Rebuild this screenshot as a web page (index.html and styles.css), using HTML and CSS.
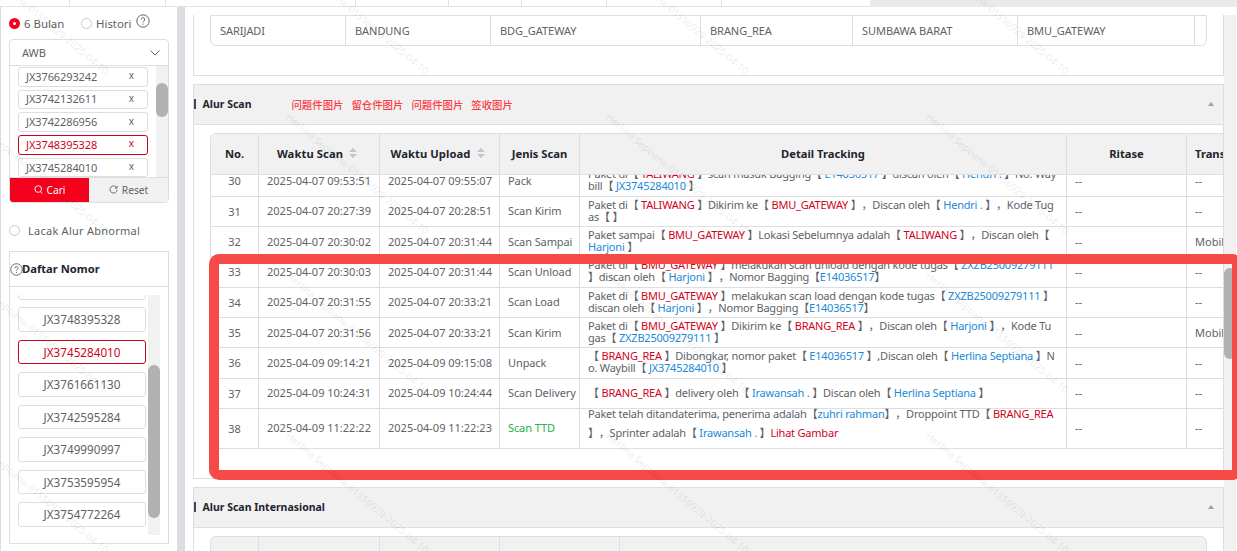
FILE: index.html
```html
<!DOCTYPE html>
<html lang="id">
<head>
    <meta charset="UTF-8">
    <meta name="viewport" content="width=device-width, initial-scale=1.0">
    <title>Lacak Paket</title>
    <link rel="stylesheet" href="styles.css">
</head>
<body>

    <nav class="tabs">
        <span class="tab t1"></span><span class="tab t2"></span><span class="tab t3"></span><span class="tab t4"></span><span class="tab t5"></span><span class="tab t6"></span><span class="tab t7"></span><span class="tab t8"></span><span class="tab-rest"></span>
    </nav>

    <div class="layout">
        <aside class="sidebar">
            <div class="period">
                <span class="radio checked"></span><span class="period-text">6 Bulan</span>
                <span class="radio"></span><span>Histori</span>
                <svg class="help" viewBox="0 0 14 14"><circle cx="7" cy="7" r="6.2"/><path d="M5.2 5.6a1.8 1.8 0 1 1 2.7 1.5c-.6.35-.9.7-.9 1.3M7 9.6v1"/></svg>
            </div>

            <div class="search-box">
                <div class="select">AWB<svg viewBox="0 0 10 6"><path d="M.5.5 5 5 9.5.5"/></svg></div>
                <div class="tag-area">
                    <div class="tags">
                        <div class="tag">JX3766293242<i>x</i></div>
                        <div class="tag">JX3742132611<i>x</i></div>
                        <div class="tag">JX3742286956<i>x</i></div>
                        <div class="tag active">JX3748395328<i>x</i></div>
                        <div class="tag">JX3745284010<i>x</i></div>
                    </div>
                    <div class="track"><div class="thumb"></div></div>
                </div>
                <div class="actions">
                    <button class="cari"><svg viewBox="0 0 10 10"><circle cx="4.7" cy="4.5" r="3.7"/><path d="M7.2 7.2 9 9.4"/></svg>Cari</button>
                    <button class="reset"><svg viewBox="0 0 10 10"><path d="M8.6 3.2A4 4 0 1 0 9 5.4M9 1v2.5H6.5"/></svg>Reset</button>
                </div>
            </div>

            <div class="abnormal"><span class="radio"></span>Lacak Alur Abnormal</div>

            <div class="numbers">
                <h2><svg class="help" viewBox="0 0 14 14"><circle cx="7" cy="7" r="6.2"/><path d="M5.2 5.6a1.8 1.8 0 1 1 2.7 1.5c-.6.35-.9.7-.9 1.3M7 9.6v1"/></svg>Daftar Nomor</h2>
                <div class="number-area">
                    <div class="number-list">
                        <div class="number"></div>
                        <div class="number">JX3748395328</div>
                        <div class="number active">JX3745284010</div>
                        <div class="number">JX3761661130</div>
                        <div class="number">JX3742595284</div>
                        <div class="number">JX3749990997</div>
                        <div class="number">JX3753595954</div>
                        <div class="number">JX3754772264</div>
                    </div>
                    <div class="track"><div class="thumb"></div></div>
                </div>
            </div>
        </aside>

        <main class="content">
            <section class="panel route">
                <div class="route-row">
                    <span>SARIJADI</span><span>BANDUNG</span><span>BDG_GATEWAY</span><span>BRANG_REA</span><span>SUMBAWA BARAT</span><span>BMU_GATEWAY</span><span></span>
                </div>
            </section>

            <section class="panel scan">
                <header class="panel-head">
                    <h2>Alur Scan</h2>
                    <div class="links"><a>问题件图片</a><a>留仓件图片</a><a>问题件图片</a><a>签收图片</a></div>
                    <span class="collapse"></span>
                </header>
                <div class="table">
                    <div class="row head">
                        <span>No.</span>
                        <span class="sortable">Waktu Scan<i class="sort"></i></span>
                        <span class="sortable">Waktu Upload<i class="sort"></i></span>
                        <span>Jenis Scan</span><span>Detail Tracking</span><span>Ritase</span><span>Trans</span>
                    </div>
                    <div class="body">
                        <div class="row tall first">
                            <span>30</span><span>2025-04-07 09:53:51</span><span>2025-04-07 09:55:07</span><span>Pack</span>
                            <span><p>Paket di【 <b>TALIWANG</b> 】scan masuk Bagging【 <a>E14036517</a> 】discan oleh【 <a>Hendri .</a> 】No. Way<br>bill【 <a>JX3745284010</a> 】</p></span>
                            <span>--</span><span>--</span>
                        </div>
                        <div class="row">
                            <span>31</span><span>2025-04-07 20:27:39</span><span>2025-04-07 20:28:51</span><span>Scan Kirim</span>
                            <span><p>Paket di【 <b>TALIWANG</b> 】Dikirim ke【 <b>BMU_GATEWAY</b> 】，Discan oleh【 <a>Hendri .</a> 】，Kode Tug<br>as【 】</p></span>
                            <span>--</span><span>--</span>
                        </div>
                        <div class="row tall">
                            <span>32</span><span>2025-04-07 20:30:02</span><span>2025-04-07 20:31:44</span><span>Scan Sampai</span>
                            <span><p>Paket sampai【 <b>BMU_GATEWAY</b> 】Lokasi Sebelumnya adalah【 <b>TALIWANG</b> 】，Discan oleh【<br><a>Harjoni</a> 】</p></span>
                            <span>--</span><span>Mobil</span>
                        </div>
                        <div class="row">
                            <span>33</span><span>2025-04-07 20:30:03</span><span>2025-04-07 20:31:44</span><span>Scan Unload</span>
                            <span><p>Paket di【 <b>BMU_GATEWAY</b> 】melakukan scan unload dengan kode tugas【 <a>ZXZB25009279111</a><br>】discan oleh【 <a>Harjoni</a> 】，Nomor Bagging【<a>E14036517</a>】</p></span>
                            <span>--</span><span>--</span>
                        </div>
                        <div class="row">
                            <span>34</span><span>2025-04-07 20:31:55</span><span>2025-04-07 20:33:21</span><span>Scan Load</span>
                            <span><p>Paket di【 <b>BMU_GATEWAY</b> 】melakukan scan load dengan kode tugas【 <a>ZXZB25009279111</a> 】<br>discan oleh【 <a>Harjoni</a> 】，Nomor Bagging【<a>E14036517</a>】</p></span>
                            <span>--</span><span>--</span>
                        </div>
                        <div class="row tall">
                            <span>35</span><span>2025-04-07 20:31:56</span><span>2025-04-07 20:33:21</span><span>Scan Kirim</span>
                            <span><p>Paket di【 <b>BMU_GATEWAY</b> 】Dikirim ke【 <b>BRANG_REA</b> 】，Discan oleh【 <a>Harjoni</a> 】，Kode Tu<br>gas【 <a>ZXZB25009279111</a> 】</p></span>
                            <span>--</span><span>Mobil</span>
                        </div>
                        <div class="row">
                            <span>36</span><span>2025-04-09 09:14:21</span><span>2025-04-09 09:15:08</span><span>Unpack</span>
                            <span><p>【 <b>BRANG_REA</b> 】Dibongkar, nomor paket【 <a>E14036517</a> 】,Discan oleh【 <a>Herlina Septiana</a> 】N<br>o. Waybill【 <a>JX3745284010</a> 】</p></span>
                            <span>--</span><span>--</span>
                        </div>
                        <div class="row">
                            <span>37</span><span>2025-04-09 10:24:31</span><span>2025-04-09 10:24:44</span><span>Scan Delivery</span>
                            <span><p>【 <b>BRANG_REA</b> 】delivery oleh【 <a>Irawansah .</a> 】Discan oleh【 <a>Herlina Septiana</a> 】</p></span>
                            <span>--</span><span>--</span>
                        </div>
                        <div class="row last">
                            <span>38</span><span>2025-04-09 11:22:22</span><span>2025-04-09 11:22:23</span><span class="done">Scan TTD</span>
                            <span><p>Paket telah ditandaterima, penerima adalah【<a>zuhri rahman</a>】，Droppoint TTD【 <b>BRANG_REA</b><br>】，Sprinter adalah【 <a>Irawansah .</a> 】<b>Lihat Gambar</b></p></span>
                            <span>--</span><span>--</span>
                        </div>
                    </div>
                </div>
            </section>

            <section class="panel international">
                <header class="panel-head">
                    <h2>Alur Scan Internasional</h2>
                    <span class="collapse"></span>
                </header>
                <div class="int-head"><span></span><span></span><span></span><span></span><span></span></div>
            </section>
        </main>

        <div class="page-scroll"><div class="thumb"></div></div>
    </div>

    <div class="marker"></div>
    <div class="watermarks" id="watermarks"></div>

    <script>
        // Repeat the user watermark over the whole page
        const layer = document.getElementById("watermarks");
        for (let y = -50; y < 551; y += 159.6) {
            for (let x = -32; x < 1237; x += 320) {
                const mark = document.createElement("span");
                mark.textContent = "Herlina Septiana-01556929-2025-04-10";
                mark.style.left = x + "px";
                mark.style.top = y + "px";
                layer.appendChild(mark);
            }
        }
    </script>

</body>
</html>
```

FILE: styles.css
```css
* {
    margin: 0;
    padding: 0;
    box-sizing: border-box;
}

body {
    width: 1237px;
    height: 551px;
    overflow: hidden;
    position: relative;
    background: #fff;
    color: #606266;
    font-family: "Noto Sans", "Noto Sans CJK SC", sans-serif;
    font-size: 11px;
    text-spacing-trim: space-all;
}

svg {
    fill: none;
    stroke: currentColor;
}

i {
    font-style: normal;
}

/* open page tabs */
.tabs {
    display: flex;
    height: 7px;
    border-bottom: 1px solid #e4e4e4;
}

.tab {
    border-right: 1px solid #e0e0e0;
}

.t1 { width: 70px; }
.t2 { width: 96px; }
.t3 { width: 190px; }
.t4 { width: 93px; }
.t5 { width: 73px; }
.t6 { width: 85px; }
.t7 { width: 115px; }
.t8 { width: 148px; border: 0; }

.tab-rest {
    flex: 1;
    height: 7px;
    background: #eaeaea;
}

.layout {
    display: flex;
    height: 544px;
}

/* sidebar */
.sidebar {
    flex-shrink: 0;
    width: 185px;
    padding: 8px 8px 0 8px;
    border-left: 1px solid #dcdee2;
    border-right: 8px solid #dcdde3;
}

.period {
    display: flex;
    align-items: center;
    height: 16px;
    font-size: 11.4px;
}

.radio {
    width: 11px;
    height: 11px;
    margin-right: 4px;
    border: 1px solid #c6c9cf;
    border-radius: 50%;
}

.radio.checked {
    border: 4px solid #f5001d;
}

.period-text {
    width: 57px;
}

.help {
    width: 14px;
    height: 14px;
    margin: -4px 0 0 5px;
}

.search-box {
    width: 160px;
    height: 164px;
    margin-top: 8px;
    border: 1px solid #dcdee2;
    border-radius: 4px;
    overflow: hidden;
}

.select {
    display: flex;
    justify-content: space-between;
    align-items: center;
    height: 26px;
    padding: 0 8px 0 12px;
    border-bottom: 1px solid #dcdee2;
}

.select svg {
    width: 10px;
    height: 6px;
}

.tag-area {
    display: flex;
    justify-content: space-between;
    height: 111px;
    padding-left: 8px;
    overflow: hidden;
}

.tag {
    display: flex;
    justify-content: space-between;
    align-items: center;
    width: 130px;
    height: 19.5px;
    margin: 1px 0 3.2px;
    padding: 0 13px 1px 7px;
    border: 1px solid #dcdee2;
    border-radius: 3px;
    letter-spacing: -0.1px;
}

.tag i {
    margin-top: -2px;
    font-size: 10px;
}

.active {
    color: #d0021b;
    border-color: #d0021b !important;
}

.track {
    width: 12px;
    background: #f1f1f1;
}

.thumb {
    width: 12px;
    border-radius: 6px;
    background: #b1b1b1;
}

.tag-area .thumb {
    height: 34px;
    margin-top: 17px;
}

.actions {
    display: flex;
    height: 25px;
    border-top: 1px solid #dcdee2;
}

.actions button {
    display: flex;
    justify-content: center;
    align-items: center;
    gap: 4px;
    width: 80px;
    padding-bottom: 1px;
    border: 0;
    background: #f1f1f1;
    color: #606266;
    font: inherit;
    font-size: 10.2px;
}

.actions button.cari {
    background: #f5001d;
    color: #fff;
}

.actions svg {
    width: 9px;
    height: 9px;
}

.abnormal {
    display: flex;
    align-items: center;
    height: 16px;
    margin-top: 19px;
    letter-spacing: 0.25px;
}

.abnormal .radio {
    margin-right: 8px;
}

.numbers {
    width: 160px;
    height: 293px;
    margin-top: 13px;
    border: 1px solid #dcdee2;
}

.numbers h2 {
    display: flex;
    align-items: center;
    height: 35px;
    padding-bottom: 2px;
    border-bottom: 1px solid #dcdee2;
    color: #22242e;
    font-size: 11.2px;
}

.numbers .help {
    width: 13px;
    height: 13px;
    margin: 3px -1px 0 0;
    color: #606266;
}

.number-area {
    display: flex;
    height: 240px;
    margin: 8px 8px 0;
    gap: 2px;
    overflow: hidden;
}

.number-list {
    margin-top: -20px;
}

.number {
    width: 128px;
    height: 24.5px;
    margin-bottom: 7.95px;
    border: 1px solid #dcdee2;
    border-radius: 3px;
    font-size: 11.7px;
    line-height: 22px;
    text-align: center;
}

.number-area .thumb {
    height: 153px;
    margin-top: 70px;
}

/* main panels */
.content {
    flex-shrink: 0;
    width: 1039px;
    padding: 8px 0 0 8px;
    overflow: hidden;
}

.panel {
    border: 1px solid #dcdee2;
    margin-bottom: 8px;
}

.route {
    height: 61px;
    padding-left: 16px;
    border-top: 0;
}

.route-row {
    display: grid;
    grid-template-columns: 135px 145px 210px 152px 165px 177px 12px;
    width: 997px;
    height: 31px;
    border: 1px solid #dcdee2;
    border-radius: 0 0 6px 6px;
    line-height: 30px;
}

.route-row span {
    padding-left: 9px;
    border-right: 1px solid #dcdee2;
    letter-spacing: -0.05px;
}

.route-row span:last-child {
    border: 0;
}

.panel-head {
    display: flex;
    align-items: center;
    height: 40px;
    padding: 0 9px 1px 0;
    border-bottom: 1px solid #dcdee2;
    background: #f1f1f1;
}

.panel-head h2 {
    padding-left: 6.5px;
    border-left: 2px solid #44465a;
    color: #22242e;
    font-size: 10.5px;
    line-height: 10px;
}

.links {
    display: flex;
    gap: 8px;
    margin-left: 40px;
    color: #fa3c46;
    font-size: 10.4px;
    font-weight: 500;
}

.collapse {
    margin-left: auto;
    border: 3px solid transparent;
    border-top: 0;
    border-bottom: 4px solid #a0a0a6;
}

.scan {
    height: 395px;
    padding: 0;
    overflow: hidden;
}

.table {
    width: 1100px;
    margin: 8px 0 0 16px;
    border: 1px solid #dcdee2;
    border-width: 1px 0 0 1px;
    border-radius: 6px 0 0 0;
    overflow: hidden;
}

.body {
    overflow: hidden;
}

.row {
    display: grid;
    grid-template-columns: 48px 121px 120px 80px 487px 120px 123px;
    height: 30.2px;
}

.row > span {
    display: flex;
    align-items: center;
    padding: 0 0 1px 8px;
    border-right: 1px solid #dcdee2;
    border-bottom: 1px solid #dcdee2;
    white-space: nowrap;
}

.row > span:nth-child(4) {
    letter-spacing: -0.1px;
}

.row > span:first-child {
    justify-content: center;
    padding: 0;
}

.row.head {
    height: 41px;
    background: #f1f1f1;
    color: #22242e;
    font-size: 11.2px;
    font-weight: bold;
}

.row.head > span {
    justify-content: center;
    padding: 0 0 1px;
    letter-spacing: 0;
}

.row.head > .sortable {
    padding: 0 4px 2px 0;
    letter-spacing: 0.1px;
}

.row.head > span:last-child {
    justify-content: flex-start;
    padding-left: 8px;
}

.sort {
    display: flex;
    flex-direction: column;
    gap: 2px;
    margin-left: 6px;
}

.sort::before, .sort::after {
    content: "";
    border: 4px solid transparent;
}

.sort::before {
    border-top: 0;
    border-bottom-color: #c0c4cc;
}

.sort::after {
    border-bottom: 0;
    border-top-color: #c0c4cc;
}

.row.first {
    margin-top: -9px;
}

.row.tall {
    height: 30.6px;
}

.row.last {
    height: 40px;
}

.row p {
    line-height: 12px;
    letter-spacing: -0.21px;
}

.row.last p {
    margin-top: -9px;
    line-height: 19px;
}

.row b {
    color: #d0021b;
    font-weight: normal;
}

.row a {
    color: #2189d8;
}

.row .done {
    color: #27b148;
}

.international {
    height: 90px;
}

.int-head {
    display: grid;
    grid-template-columns: 48px 121px 120px 120px 1fr;
    width: 997px;
    height: 40px;
    margin: 8px 0 0 16px;
    border: 1px solid #dcdee2;
    border-radius: 6px 6px 0 0;
    background: #f1f1f1;
}

.int-head span + span {
    border-left: 1px solid #dcdee2;
    margin-left: -1px;
}

.page-scroll {
    width: 12px;
    margin-top: 8px;
    background: #f1f1f1;
}

.page-scroll .thumb {
    height: 91px;
    margin-top: 253px;
}

/* highlight around the latest scans */
.marker {
    position: absolute;
    left: 209px;
    top: 254px;
    width: 1033px;
    height: 226px;
    border: 10px solid #f64a46;
    border-radius: 10px;
}

.watermarks {
    position: absolute;
    inset: 0;
    overflow: hidden;
    pointer-events: none;
}

.watermarks span {
    position: absolute;
    color: rgba(0, 0, 0, 0.1);
    font-size: 10px;
    line-height: 10px;
    white-space: nowrap;
    transform: rotate(40deg);
    transform-origin: 0 50%;
}
```
